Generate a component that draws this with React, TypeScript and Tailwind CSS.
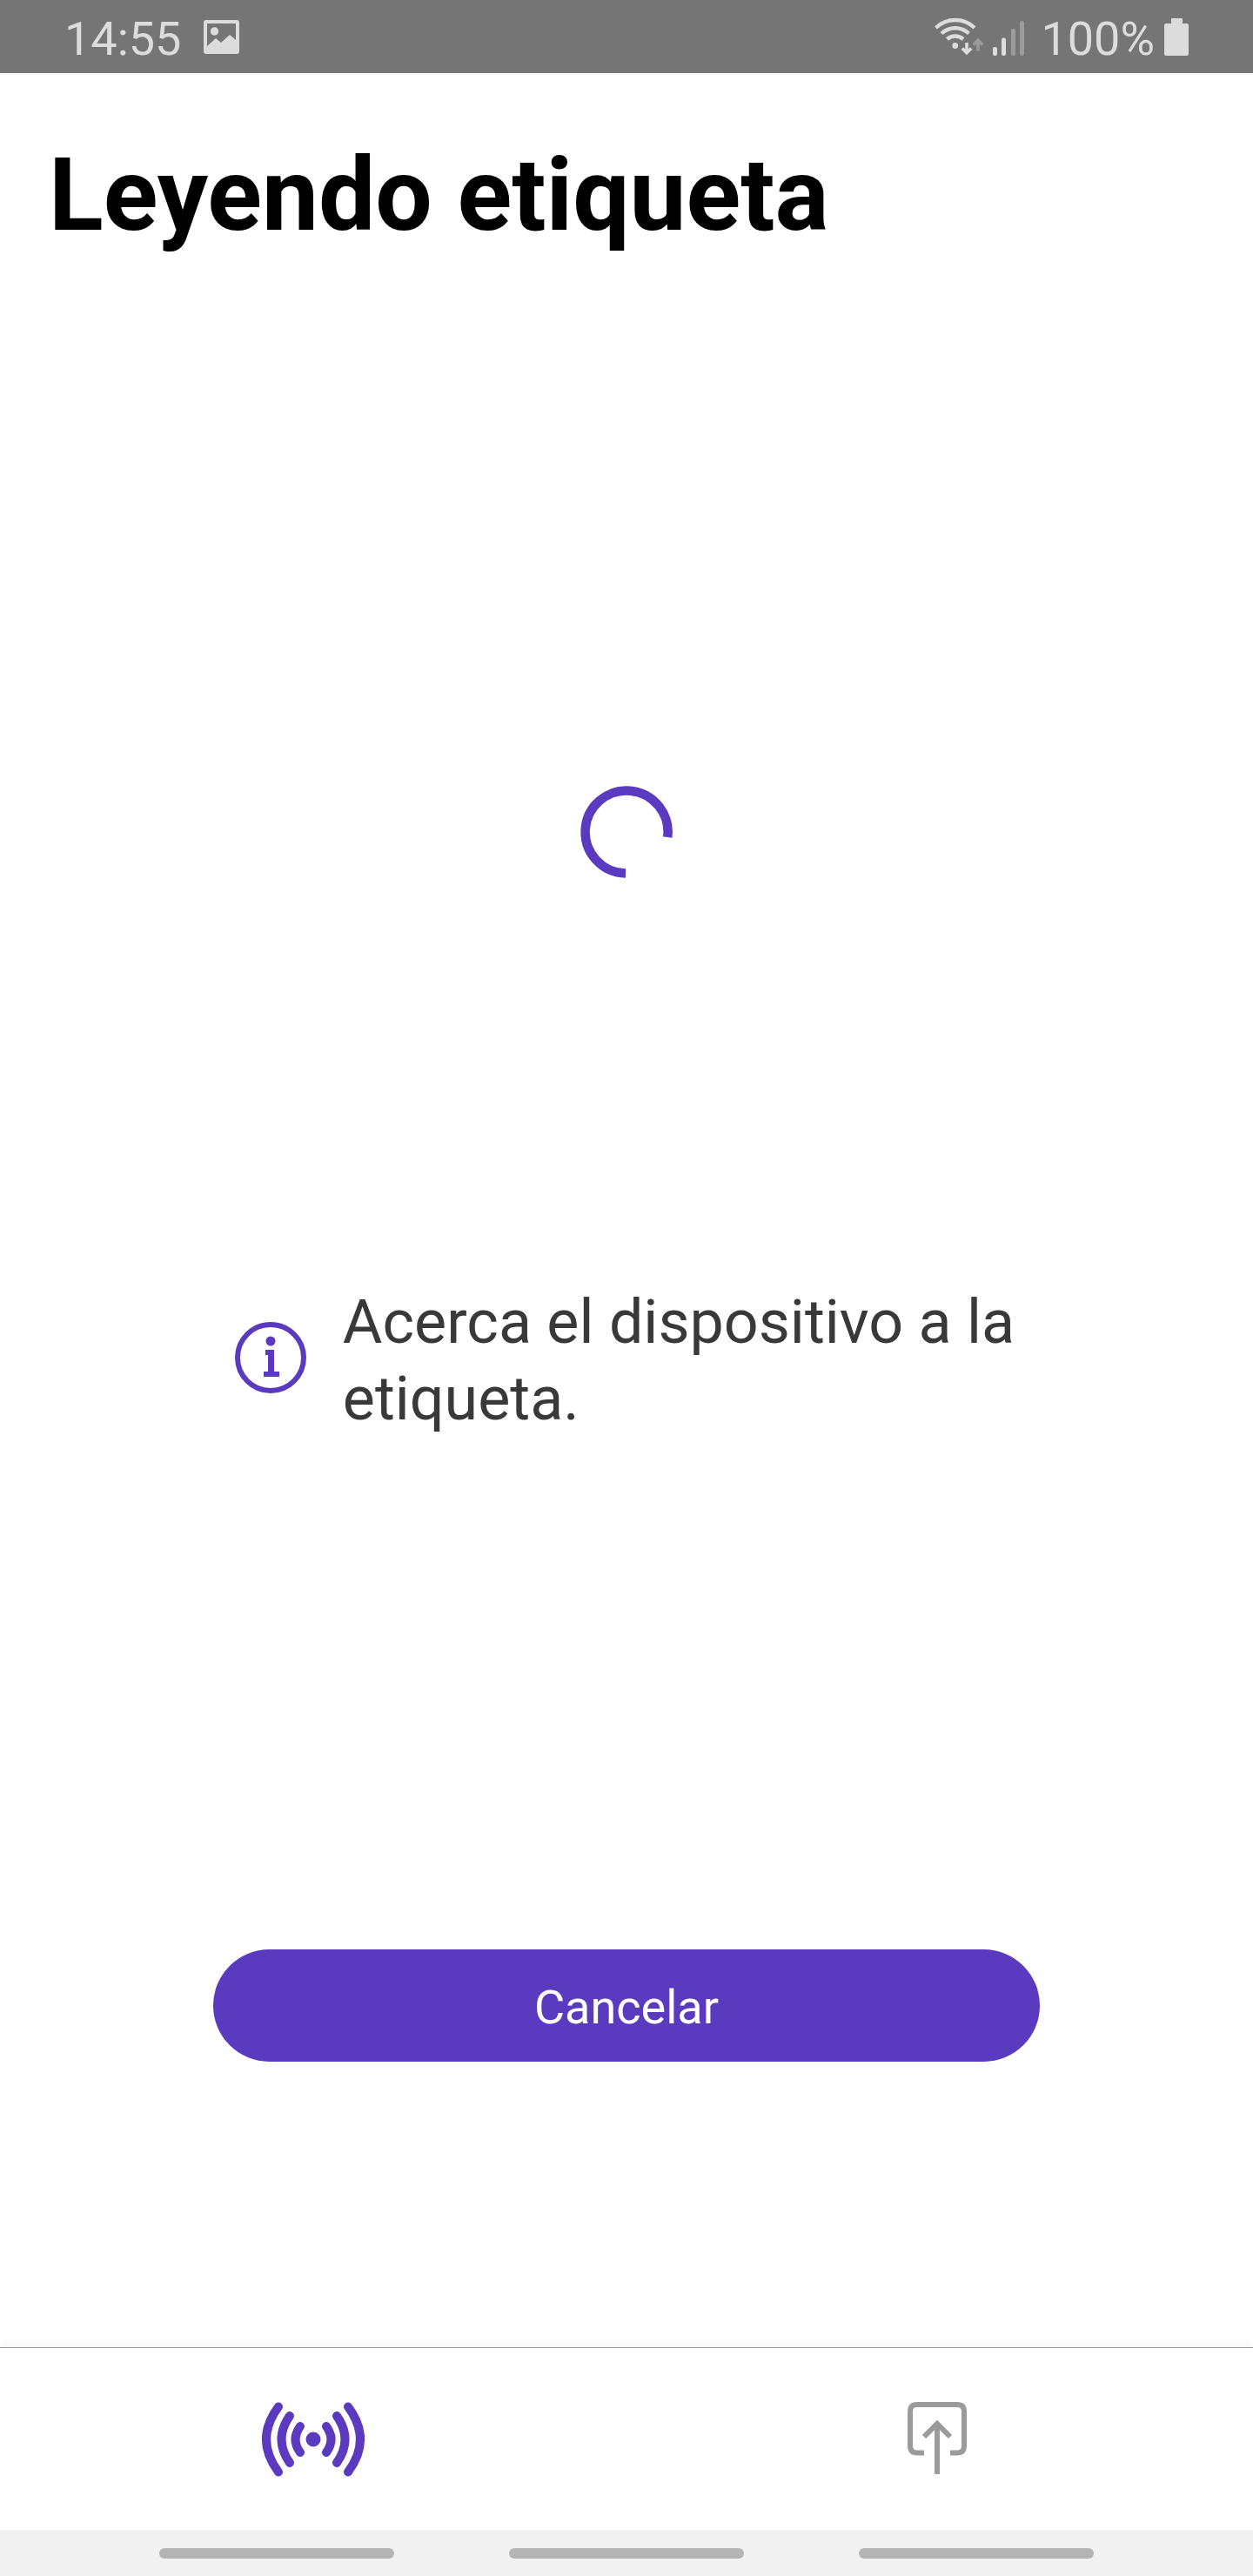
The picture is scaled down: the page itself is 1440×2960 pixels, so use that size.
export default function App() {
  return (
    <div className="flex min-h-screen flex-col bg-white font-[Roboto,sans-serif] text-black">
      <header className="flex h-[84px] shrink-0 items-center justify-between bg-[#757575] pr-[74px] pl-[74px] text-[#dcdcdc]">
        <div className="flex items-center gap-[26px]">
          <time className="pt-1.5 text-[54px] leading-none">14:55</time>
          <svg className="h-10 w-[41px]" viewBox="0 0 41 40" aria-hidden="true">
            <path
              fillRule="evenodd"
              fill="currentColor"
              d="M3 1H38Q41 1 41 4V37Q41 40 38 40H3Q0 40 0 37V4Q0 1 3 1ZM4 5V31L14 22L20 27L30 18L37 24V5Z"
            />
            <circle cx="12.5" cy="14" r="4.7" fill="currentColor" />
          </svg>
        </div>
        <div className="flex items-center">
          <svg className="h-[44px] w-[56px]" viewBox="0 0 56 44" fill="none" aria-label="Wi-Fi" role="img">
            <g stroke="currentColor" strokeWidth="4.4">
              <path d="M1.5 12A32 32 0 0 1 46 12" />
              <path d="M8 18.5A23 23 0 0 1 39.5 18.5" />
              <path d="M14.5 25A14 14 0 0 1 33 25" />
            </g>
            <circle cx="23.7" cy="32.5" r="3.4" fill="currentColor" />
            <path d="M37 29V40M31.8 35.500L37 40.700L42.2 35.500" stroke="currentColor" strokeWidth="3.600" />
            <path d="M50 38.500V27M44.8 31.500L50 26.300L55.2 31.500" stroke="#9b9b9b" strokeWidth="3.600" />
          </svg>
          <svg className="ml-[11px] h-[44px] w-[37px]" viewBox="0 0 37 44" aria-label="Señal" role="img">
            <rect x="0" y="34" width="5" height="10" rx="2" fill="currentColor" />
            <rect x="10" y="23.500" width="5" height="20.500" rx="2" fill="currentColor" />
            <rect x="21" y="13" width="5" height="31" rx="2" fill="#9b9b9b" />
            <rect x="31" y="4" width="5" height="40" rx="2" fill="#9b9b9b" />
          </svg>
          <span className="ml-[18px] pt-1.5 text-[54px] leading-none">100%</span>
          <svg className="ml-[11px] h-[43px] w-7" viewBox="0 0 28 43" aria-label="Batería" role="img">
            <path
              fill="currentColor"
              d="M9 0H20Q21 0 21 1V6H26Q28 6 28 8V41Q28 43 26 43H2Q0 43 0 41V8Q0 6 2 6H8V1Q8 0 9 0Z"
            />
          </svg>
        </div>
      </header>

      <main className="flex grow flex-col items-center">
        <h1 className="mt-[72px] w-full px-14 text-[116px] leading-[136px] font-bold">Leyendo etiqueta</h1>

        <svg className="mt-[611px] size-[106px]" viewBox="0 0 106 106" fill="none" role="status" aria-label="Leyendo">
          <path d="M52 100.500A47.500 47.500 0 1 1 100.200 59" stroke="#5a3abf" strokeWidth="10.500" />
        </svg>

        <section className="mt-[460px] flex w-[66%] items-center gap-[42px] px-[25px] text-[#393939]">
          <svg className="size-[82px] shrink-0 text-[#5a3abf]" viewBox="0 0 82 82" aria-hidden="true">
            <circle cx="41" cy="41" r="38" fill="none" stroke="currentColor" strokeWidth="6" />
            <circle cx="41" cy="22" r="5.500" fill="currentColor" />
            <path d="M35 32H45V57H51V63H33V57H38V38H35Z" fill="currentColor" />
          </svg>
          <p className="pt-1.5 text-[70px] leading-[88px]">Acerca el dispositivo a la etiqueta.</p>
        </section>

        <button
          type="button"
          className="mt-[589px] h-[129px] w-[66%] rounded-full bg-[#5a3abf] pt-1 text-[54px] leading-none text-white"
        >
          Cancelar
        </button>
      </main>

      <nav className="grid h-[210px] shrink-0 grid-cols-2 border-t border-[#9b9b9b] bg-white shadow-[0_-2px_12px_rgba(0,0,0,0.05)]">
        <button type="button" aria-label="Leer etiqueta" className="flex items-center justify-center text-[#5a3abf]">
          <svg className="h-[86px] w-[120px]" viewBox="0 0 120 86" fill="none" aria-hidden="true">
            <circle cx="60" cy="43" r="8.500" fill="currentColor" />
            <g stroke="currentColor" strokeWidth="10" strokeLinecap="round">
              <path d="M45 28Q34 43 45 58" />
              <path d="M33 16Q14 43 33 70" />
              <path d="M20 5.500Q-8 43 20 80.500" />
              <path d="M75 28Q86 43 75 58" />
              <path d="M87 16Q106 43 87 70" />
              <path d="M100 5.500Q128 43 100 80.500" />
            </g>
          </svg>
        </button>
        <button type="button" aria-label="Compartir" className="flex items-center justify-center text-[#9b9b9b]">
          <svg className="h-[86px] w-[74px]" viewBox="0 0 74 86" fill="none" stroke="currentColor" strokeWidth="6" aria-hidden="true">
            <path d="M19 58.500H11Q3 58.500 3 50.500V11Q3 3 11 3H57Q65 3 65 11V50.500Q65 58.500 57 58.500H49" />
            <path d="M34 83V25M19 40L34 25L49 40" />
          </svg>
        </button>
      </nav>

      <footer className="flex h-[53px] shrink-0 justify-center gap-[132px] bg-[#f1f1f1] pt-[21px]">
        <span className="h-3 w-[270px] rounded-full bg-[#b5b5b5]" />
        <span className="h-3 w-[270px] rounded-full bg-[#b5b5b5]" />
        <span className="h-3 w-[270px] rounded-full bg-[#b5b5b5]" />
      </footer>
    </div>
  );
}
